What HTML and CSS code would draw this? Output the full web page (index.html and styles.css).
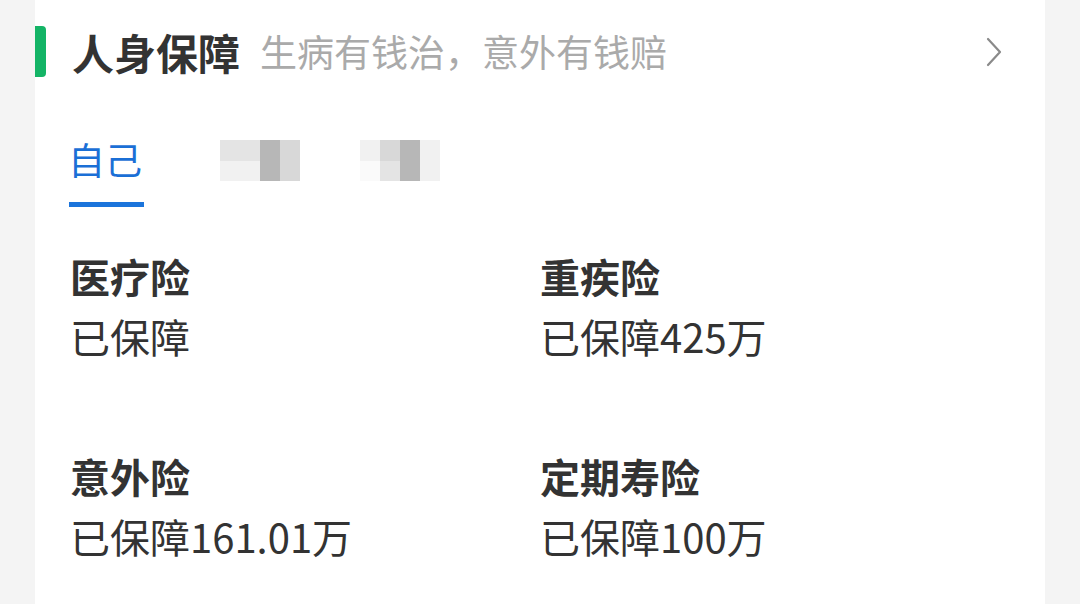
FILE: index.html
```html
<!DOCTYPE html>
<html lang="zh-CN">
<head>
<meta charset="utf-8">
<link rel="stylesheet" href="styles.css">
</head>
<body>
<div class="card">
  <div class="header">
    <span class="bar"></span>
    <span class="title">人身保障</span>
    <span class="subtitle">生病有钱治，意外有钱赔</span>
    <svg class="chev" width="16" height="30" viewBox="0 0 16 30"><path d="M2 2 L14 15 L2 28" fill="none" stroke="#8a8a8a" stroke-width="2.2" stroke-linecap="round" stroke-linejoin="round"/></svg>
  </div>
  <div class="tabs">
    <div class="tab active">自己<span class="line"></span></div>
    <div class="tab mosaic m1">
      <i class="c1"></i><i class="c1"></i><i class="c3"></i><i class="c2"></i>
      <i class="c0"></i><i class="c0"></i><i class="c3"></i><i class="c2"></i>
    </div>
    <div class="tab mosaic m2">
      <i class="c0"></i><i class="c2"></i><i class="c3"></i><i class="c0"></i>
      <i class="w"></i><i class="c1"></i><i class="c3"></i><i class="c0"></i>
    </div>
  </div>
  <div class="grid">
    <div class="item"><div class="label">医疗险</div><div class="value">已保障</div></div>
    <div class="item"><div class="label">重疾险</div><div class="value">已保障425万</div></div>
    <div class="item"><div class="label">意外险</div><div class="value">已保障161.01万</div></div>
    <div class="item"><div class="label">定期寿险</div><div class="value">已保障100万</div></div>
  </div>
</div>
</body>
</html>
```
FILE: styles.css
```css
html, body {
  margin: 0;
  padding: 0;
  background: #f4f4f4;
  font-family: "Noto Sans CJK SC", "Noto Sans", sans-serif;
  color: #333;
}
.card {
  margin-left: 35px;
  width: 1010px;
  height: 604px;
  background: #fff;
  padding-top: 26px;
  box-sizing: border-box;
  overflow: hidden;
}
.header {
  display: flex;
  align-items: center;
  height: 51px;
  padding-right: 43px;
}
.bar {
  width: 11px;
  height: 51px;
  background: #14b466;
  border-radius: 0 4px 4px 0;
}
.title {
  margin-left: 26px;
  font-size: 42px;
  font-weight: 700;
  line-height: 51px;
  color: #333;
}
.subtitle {
  margin-left: 20px;
  font-size: 37px;
  line-height: 51px;
  color: #aaa;
  flex: 1;
}
.chev {
  display: block;
}
.tabs {
  display: flex;
  align-items: flex-start;
  padding-left: 33px;
  margin-top: 57px;
  height: 112px;
}
.tab {
  position: relative;
  font-size: 37px;
  line-height: 50px;
}
.tab.active {
  color: #1b6fd6;
}
.tab .line {
  position: absolute;
  left: 1px;
  width: 75px;
  top: 68px;
  height: 5px;
  background: #1b74db;
}
.mosaic {
  display: grid;
  grid-template-columns: repeat(4, 20px);
  grid-template-rows: 21px 20px;
  margin-top: 6px;
}
.m1 { margin-left: 78px; }
.m2 { margin-left: 60px; }
.mosaic i { display: block; }
.c0 { background: #f1f1f1; }
.c1 { background: #e4e4e4; }
.c2 { background: #d8d8d8; }
.c3 { background: #b7b7b7; }
.w { background: #fafafa; }
.grid {
  display: grid;
  grid-template-columns: 470px 1fr;
  padding-left: 35px;
}
.item {
  height: 200px;
}
.label {
  font-size: 40px;
  font-weight: 700;
  line-height: 60px;
  color: #333;
}
.value {
  font-size: 40px;
  line-height: 60px;
  color: #333;
}
```
